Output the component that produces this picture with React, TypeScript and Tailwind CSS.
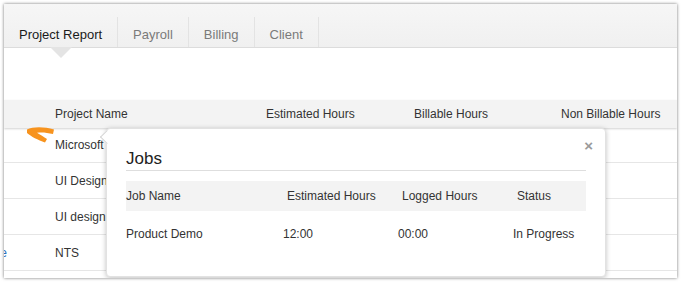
const tabs = ["Project Report", "Payroll", "Billing", "Client"];

const rows = ["Microsoft", "UI Design", "UI design", "NTS"];

const App = () => {
  return (
    <div className="w-[682px] h-[283px] bg-white p-[4px] font-['Liberation_Sans',Arial,sans-serif] text-[12px] text-[#333]">
      <div className="relative w-[673px] h-[274px] bg-white overflow-hidden shadow-[0_0_3px_rgba(0,0,0,0.55)]">
        {/* tabs */}
        <div className="h-[44px] flex items-end bg-gradient-to-b from-[#f6f6f6] to-[#f0f0f0] border-b border-[#dcdcdc]">
          {tabs.map((tab, i) => (
            <div
              key={tab}
              className={`relative h-[30px] flex items-center pt-[5px] px-[15px] border-r border-[#e3e3e3] text-[13px] ${
                i === 0 ? "text-[#1a1a1a]" : "text-[#7a7a7a]"
              }`}
            >
              {tab}
              {i === 0 && (
                <div className="absolute left-1/2 -translate-x-1/2 top-full w-0 h-0 border-l-[11px] border-r-[11px] border-t-[11px] border-l-transparent border-r-transparent border-t-[#e4e4e4]" />
              )}
            </div>
          ))}
        </div>

        <div className="h-[52px]" />

        {/* main table */}
        <div className="grid grid-cols-[51px_211px_148px_147px_1fr] h-[28px] items-center bg-[#f3f3f3] shadow-[0_1px_2px_rgba(0,0,0,0.18)] relative">
          <div />
          <div>Project Name</div>
          <div>Estimated Hours</div>
          <div>Billable Hours</div>
          <div>Non Billable Hours</div>
        </div>
        {rows.map((name, i) => (
          <div
            key={name}
            className={`grid grid-cols-[51px_1fr] items-center border-b border-[#e6e6e6] ${
              i === 0 ? "h-[35px]" : "h-[36px]"
            }`}
          >
            <div className="flex">
              {i === 3 && (
                <div className="w-[3px] overflow-hidden flex justify-end text-[#2a6ebb]">
                  <span>Edite</span>
                </div>
              )}
            </div>
            <div>{name}</div>
          </div>
        ))}

        {/* orange pointer */}
        <svg
          className="absolute left-[22px] top-[122px]"
          width="30"
          height="18"
          viewBox="0 0 30 18"
        >
          <path
            d="M1 3.5 C 7 0.5, 18 0.5, 28 3.5 L 27 8 C 21 6.5, 15 6, 11 6.8 C 14 8.5, 18 11, 21 13 L 19 16.5 C 12 14, 5 10.5, 1 7 Z"
            fill="#f7931e"
          />
        </svg>

        {/* popup */}
        <div className="absolute left-[102px] top-[124px] w-[500px] h-[149px] bg-white rounded-[4px] border border-[#e2e2e2] shadow-[0_1px_5px_rgba(0,0,0,0.25)] px-[19px]">
          <div className="absolute -left-[5px] top-[3px] w-[10px] h-[10px] rotate-45 bg-white border-l border-b border-[#d6d6d6]" />
          <div className="absolute right-[12px] top-[9px] text-[#9a9a9a] text-[15px] leading-none font-bold">
            ×
          </div>
          <div className="pt-[21px] pb-[2px] text-[17px] text-[#222] leading-[18px] border-b border-[#dedede]">
            Jobs
          </div>
          <div className="mt-[10px] grid grid-cols-[157px_115px_115px_1fr] h-[30px] items-center bg-[#f3f3f3]">
            <div>Job Name</div>
            <div className="pl-[4px]">Estimated Hours</div>
            <div className="pl-[4px]">Logged Hours</div>
            <div className="pl-[4px]">Status</div>
          </div>
          <div className="grid grid-cols-[157px_115px_115px_1fr] h-[46px] items-center">
            <div>Product Demo</div>
            <div>12:00</div>
            <div>00:00</div>
            <div>In Progress</div>
          </div>
        </div>
      </div>
    </div>
  );
};

export default App;
